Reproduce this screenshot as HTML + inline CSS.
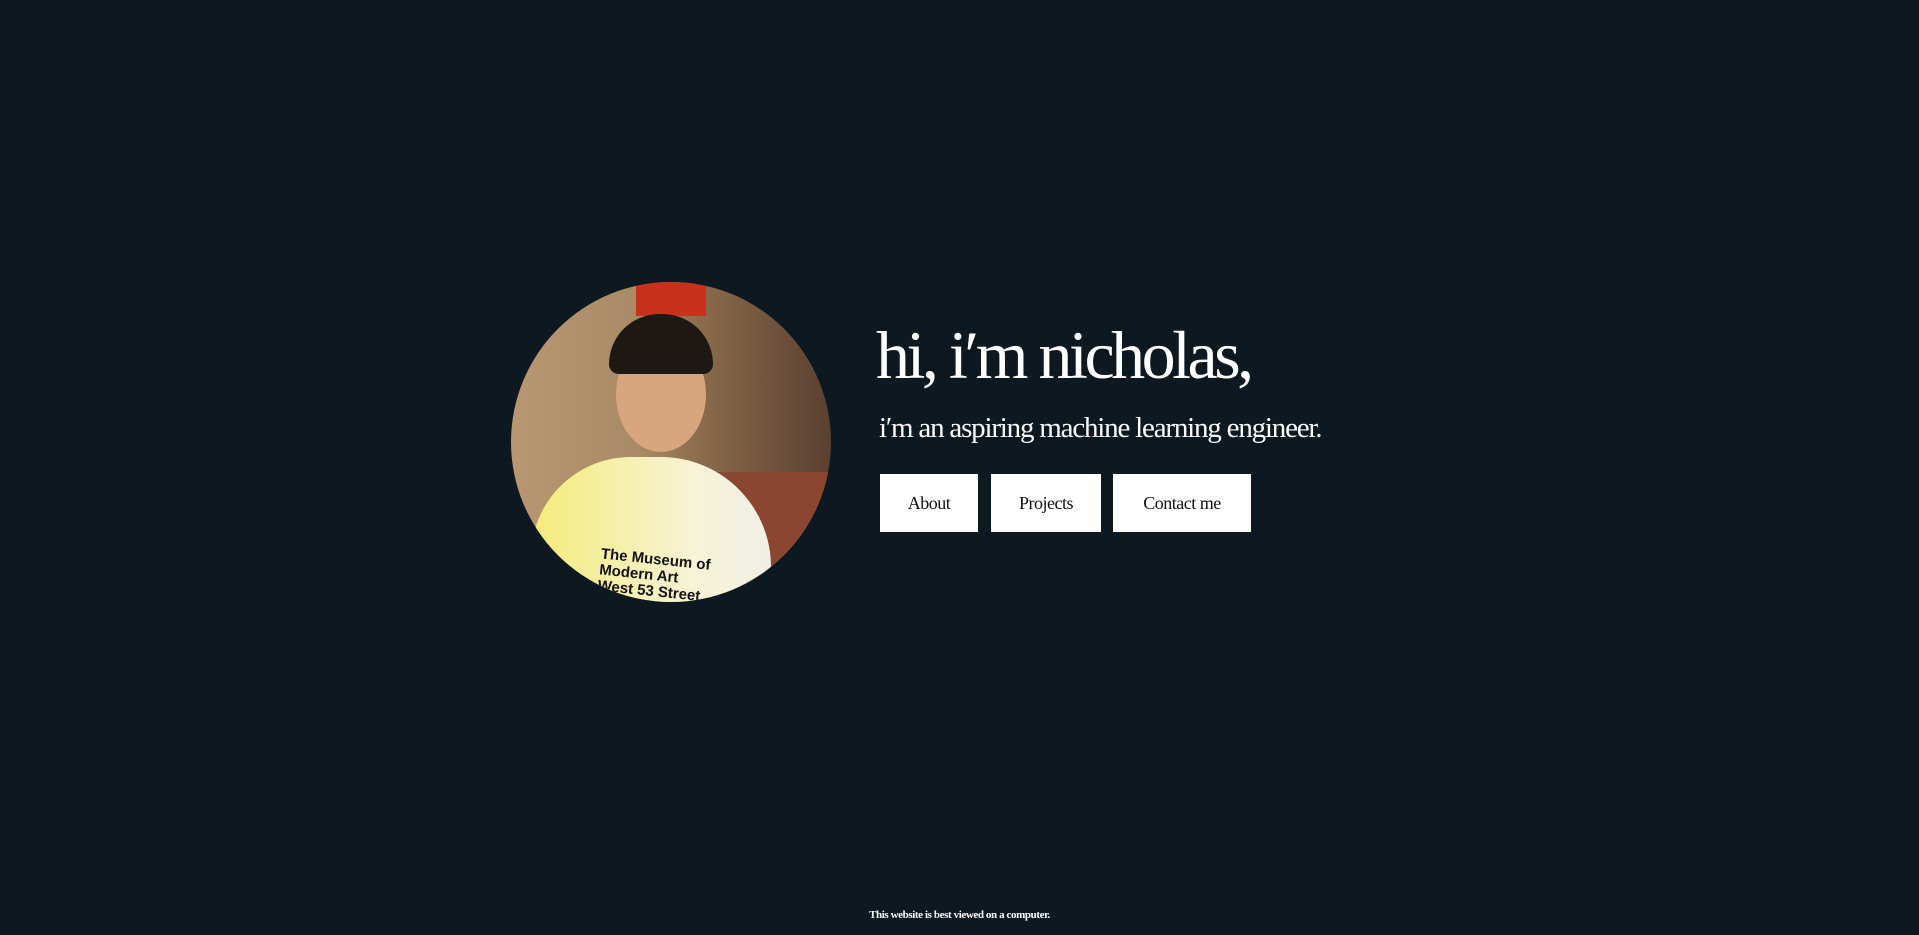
<!DOCTYPE html>
<html><head><meta charset="utf-8"><style>
html,body{margin:0;padding:0;}
body{width:1919px;height:935px;background:#0e1821;position:relative;overflow:hidden;font-family:"Liberation Serif",serif;color:#fff;}
.photo{position:absolute;left:511px;top:282px;width:320px;height:320px;border-radius:50%;overflow:hidden;
background:
linear-gradient(90deg,#b89872 0%,#a88a66 40%,#8a6a4c 60%,#5a4030 100%);}
.floor{position:absolute;left:160px;top:190px;width:170px;height:130px;background:#8a4630;}
.hat{position:absolute;left:125px;top:0;width:70px;height:34px;background:#c8321c;}
.shirt{position:absolute;left:20px;top:175px;width:240px;height:180px;border-radius:100px 110px 0 0;background:linear-gradient(90deg,#f4ec7a,#f7f3d8 70%,#efefe6);}
.shirt span{position:absolute;left:68px;top:95px;color:#111;font:bold 15px "Liberation Sans",sans-serif;line-height:16px;transform:rotate(6deg);}
.face{position:absolute;left:105px;top:55px;width:90px;height:115px;border-radius:50%;background:#d9a57c;}
.hair{position:absolute;left:98px;top:32px;width:104px;height:60px;border-radius:52px 52px 10px 10px;background:#1e1814;}
h1{position:absolute;left:876px;top:305px;margin:0;font-weight:normal;font-size:68px;letter-spacing:-3.5px;line-height:100px;white-space:nowrap;}
.sub{position:absolute;left:879px;top:410px;margin:0;font-size:29px;letter-spacing:-1.2px;line-height:36px;white-space:nowrap;}
.btn{position:absolute;top:474px;height:58px;background:#fff;color:#111;font-size:18px;letter-spacing:-0.5px;display:flex;align-items:center;justify-content:center;}
.foot{position:absolute;left:0;width:1919px;top:909px;text-align:center;font-size:11px;font-weight:bold;letter-spacing:-0.4px;}
</style></head><body>
<div class="photo"><div class="floor"></div><div class="hat"></div><div class="shirt"><span>The Museum of<br>Modern Art<br>West 53 Street</span></div><div class="face"></div><div class="hair"></div></div>
<h1>hi, i′m nicholas,</h1>
<p class="sub">i′m an aspiring machine learning engineer.</p>
<div class="btn" style="left:880px;width:98px">About</div>
<div class="btn" style="left:991px;width:110px">Projects</div>
<div class="btn" style="left:1113px;width:138px">Contact me</div>
<div class="foot">This website is best viewed on a computer.</div>
</body></html>
